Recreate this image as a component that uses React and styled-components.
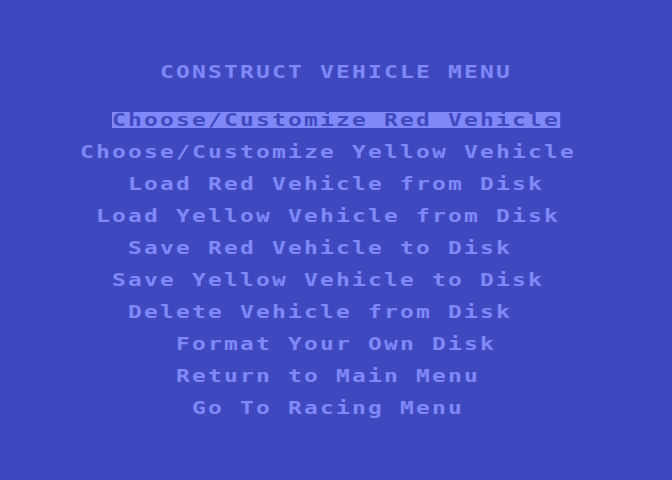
import React from "react";
import styled, { createGlobalStyle } from "styled-components";

const BG = "#4048c0";
const INK = "#8088f8";
// every character sits in a 16px cell; glyphs are drawn narrower then stretched
const STRETCH = 1.35;
const CELL = 16;

const GlobalStyle = createGlobalStyle`
  html, body {
    margin: 0;
    padding: 0;
    background: ${BG};
  }
`;

const Screen = styled.div`
  width: 672px;
  height: 480px;
  background: ${BG};
  padding-top: 64px;
  box-sizing: border-box;
  display: flex;
  flex-direction: column;
  overflow: hidden;
`;

const Menu = styled.div`
  display: flex;
  flex-direction: column;
  gap: 16px;
  margin-top: 32px;
`;

const Row = styled.div`
  height: 16px;
  padding-left: ${(p) => p.col * CELL}px;
`;

const Label = styled.span`
  display: inline-block;
  height: 16px;
  line-height: 16px;
  font-family: "DejaVu Sans Mono", "Liberation Mono", monospace;
  font-weight: bold;
  font-size: 17px;
  letter-spacing: ${CELL / STRETCH - 17 * 0.602}px;
  white-space: pre;
  transform: scaleX(${STRETCH});
  transform-origin: left center;
  color: ${(p) => (p.selected ? BG : INK)};
  background: ${(p) => (p.selected ? INK : "transparent")};
`;

const items = [
  { text: "Choose/Customize Red Vehicle", col: 7, selected: true },
  { text: "Choose/Customize Yellow Vehicle", col: 5 },
  { text: "Load Red Vehicle from Disk", col: 8 },
  { text: "Load Yellow Vehicle from Disk", col: 6 },
  { text: "Save Red Vehicle to Disk", col: 8 },
  { text: "Save Yellow Vehicle to Disk", col: 7 },
  { text: "Delete Vehicle from Disk", col: 8 },
  { text: "Format Your Own Disk", col: 11 },
  { text: "Return to Main Menu", col: 11 },
  { text: "Go To Racing Menu", col: 12 },
];

export default function App() {
  return (
    <>
      <GlobalStyle />
      <Screen>
        <Row col={10}>
          <Label>CONSTRUCT VEHICLE MENU</Label>
        </Row>
        <Menu>
          {items.map((it) => (
            <Row key={it.text} col={it.col}>
              <Label selected={it.selected}>{it.text}</Label>
            </Row>
          ))}
        </Menu>
      </Screen>
    </>
  );
}
